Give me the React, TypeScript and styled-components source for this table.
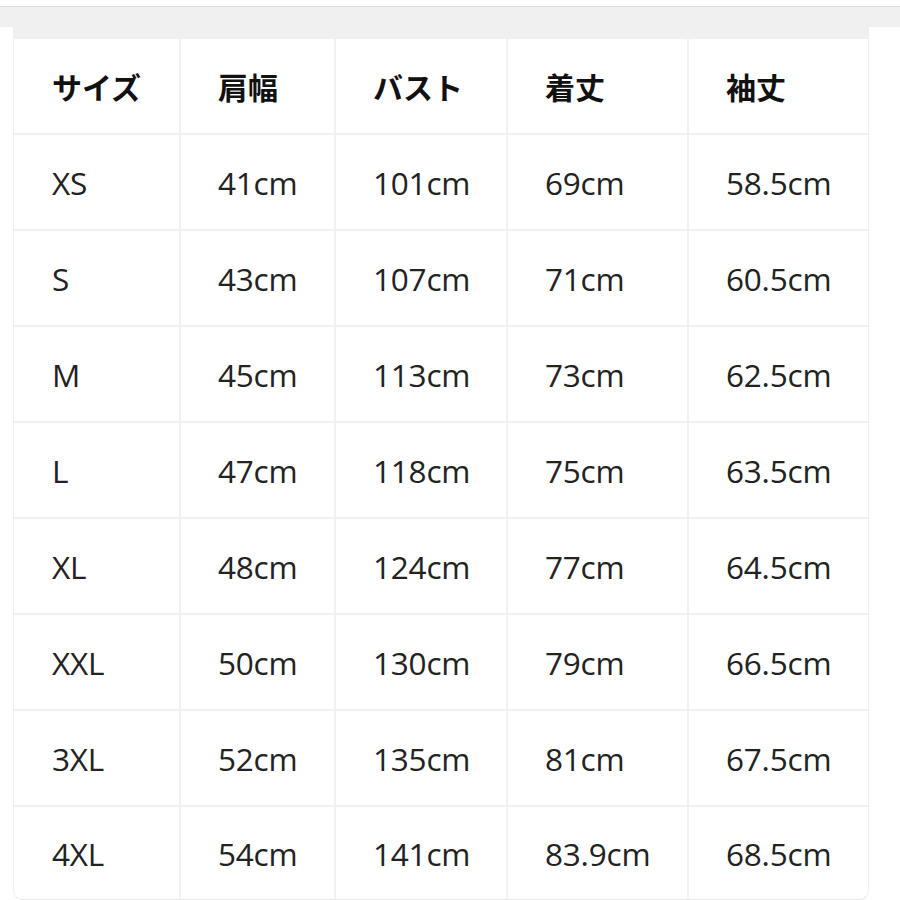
import styled, { createGlobalStyle } from "styled-components"

const Global = createGlobalStyle`
    body {
        margin: 0;
        background: #ffffff;
        font-family: "Open Sans", "Noto Sans CJK JP", sans-serif;
        color: #222;
    }
`

const Page = styled.div`
    width: 900px;
    height: 900px;
    overflow: hidden;
    display: flex;
    flex-direction: column;
`
const TopBar = styled.div`
    margin-top: 6px;
    height: 20px;
    flex-shrink: 0;
    background: #f0f0f0;
    border-top: 1px solid #dcdcdc;
`
const Wrap = styled.div`
    padding: 0 31px 0 13px;
`
const Card = styled.div`
    background: #fff;
    border-top: 12px solid #f0f0f0;
    border-left: 1px solid #eeeeee;
    border-right: 1px solid #eeeeee;
    border-bottom: 1px solid #e8e8e8;
    border-radius: 0 0 9px 9px;
    display: grid;
    grid-template-columns: 167px 155px 172px 181px 179px;
    overflow: hidden;
`
const Cell = styled.div<{ $head?: boolean; $last?: boolean; $first?: boolean; $bottom?: boolean }>`
    height: ${p => (p.$bottom ? '92px' : '96px')};
    box-sizing: border-box;
    display: flex;
    align-items: center;
    padding-left: ${p => (p.$first ? '38px' : '37px')};
    border-right: ${p => (p.$last ? 'none' : '2px solid #f1f1f1')};
    border-bottom: ${p => (p.$bottom ? 'none' : '2px solid #f1f1f1')};
    font-size: ${p => (p.$head ? '30px' : '31.5px')};
    font-weight: ${p => (p.$head ? 700 : 400)};
    font-family: ${p => (p.$head ? '"Noto Sans CJK JP", sans-serif' : '"Open Sans", sans-serif')};
    color: ${p => (p.$head ? '#111' : '#222')};
    letter-spacing: ${p => (p.$head ? '0' : '-0.2px')};
`

const heads = ['サイズ', '肩幅', 'バスト', '着丈', '袖丈']
const rows = [
    ['XS', '41cm', '101cm', '69cm', '58.5cm'],
    ['S', '43cm', '107cm', '71cm', '60.5cm'],
    ['M', '45cm', '113cm', '73cm', '62.5cm'],
    ['L', '47cm', '118cm', '75cm', '63.5cm'],
    ['XL', '48cm', '124cm', '77cm', '64.5cm'],
    ['XXL', '50cm', '130cm', '79cm', '66.5cm'],
    ['3XL', '52cm', '135cm', '81cm', '67.5cm'],
    ['4XL', '54cm', '141cm', '83.9cm', '68.5cm'],
]

export default function App() {
    return (
        <Page>
            <Global />
            <TopBar />
            <Wrap>
                <Card>
                    {heads.map((h, i) => (
                        <Cell key={h} $head $first={i === 0} $last={i === 4}>{h}</Cell>
                    ))}
                    {rows.map((r, ri) =>
                        r.map((v, i) => (
                            <Cell
                                key={r[0] + i}
                                $first={i === 0}
                                $last={i === 4}
                                $bottom={ri === rows.length - 1}
                            >{v}</Cell>
                        ))
                    )}
                </Card>
            </Wrap>
        </Page>
    )
}
